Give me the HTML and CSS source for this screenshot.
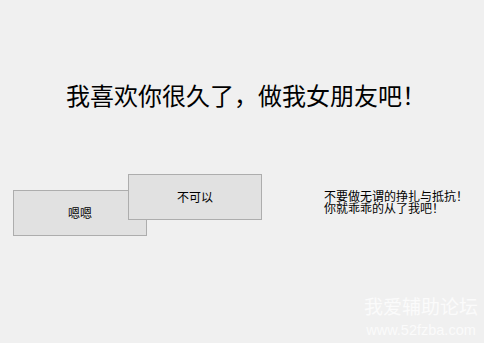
FILE: index.html
```html
<!DOCTYPE html>
<html lang="zh-CN">
<head>
<meta charset="utf-8">
<title>表白</title>
<link rel="stylesheet" href="styles.css">
</head>
<body>
<div class="window">
  <h1 class="title">我喜欢你很久了，做我女朋友吧！</h1>
  <div class="row">
    <button class="btn btn-yes">嗯嗯</button>
    <p class="message"><span class="line">不要做无谓的挣扎与抵抗！</span><span class="line">你就乖乖的从了我吧！</span></p>
    <button class="btn btn-no">不可以</button>
  </div>
  <div class="watermark">
    <div class="wm-cn">我爱辅助论坛</div>
    <div class="wm-url">www.52fzba.com</div>
  </div>
</div>
</body>
</html>
```

FILE: styles.css
```css
html, body {
  margin: 0;
  padding: 0;
  background: #f0f0f0;
}

.window {
  position: relative;
  width: 484px;
  height: 343px;
  overflow: hidden;
  background: #f0f0f0;
  font-family: "Noto Sans CJK SC", "Noto Sans", sans-serif;
  color: #000;
}

.title {
  margin: 0;
  padding: 82px 0 0 8px;
  text-align: center;
  font-size: 24px;
  line-height: 26px;
  font-weight: normal;
}

.row {
  position: relative;
  display: flex;
  align-items: flex-start;
  margin-top: 82px;
  padding-left: 13px;
}

.btn {
  box-sizing: border-box;
  width: 134px;
  height: 46px;
  margin: 0;
  padding: 0;
  background: #e1e1e1;
  border: 1px solid #adadad;
  font-family: "Noto Sans CJK SC", "Noto Sans", sans-serif;
  font-size: 12px;
  line-height: 14px;
  color: #000;
}

.message {
  margin: 0 0 0 177px;
  font-size: 12px;
  line-height: 12px;
  white-space: nowrap;
}

.line {
  display: block;
  height: 12px;
}

.btn-no {
  position: absolute;
  left: 128px;
  top: -16px;
}

.watermark {
  position: absolute;
  right: 6px;
  bottom: 5px;
  display: flex;
  flex-direction: column;
  align-items: center;
  color: #fbfbfb;
  white-space: nowrap;
}

.wm-cn {
  font-family: "Noto Sans CJK SC", sans-serif;
  font-size: 19px;
  line-height: 24px;
}

.wm-url {
  margin-top: 4px;
  font-family: "Liberation Sans", Arial, sans-serif;
  font-size: 14.5px;
  line-height: 16px;
}
```
